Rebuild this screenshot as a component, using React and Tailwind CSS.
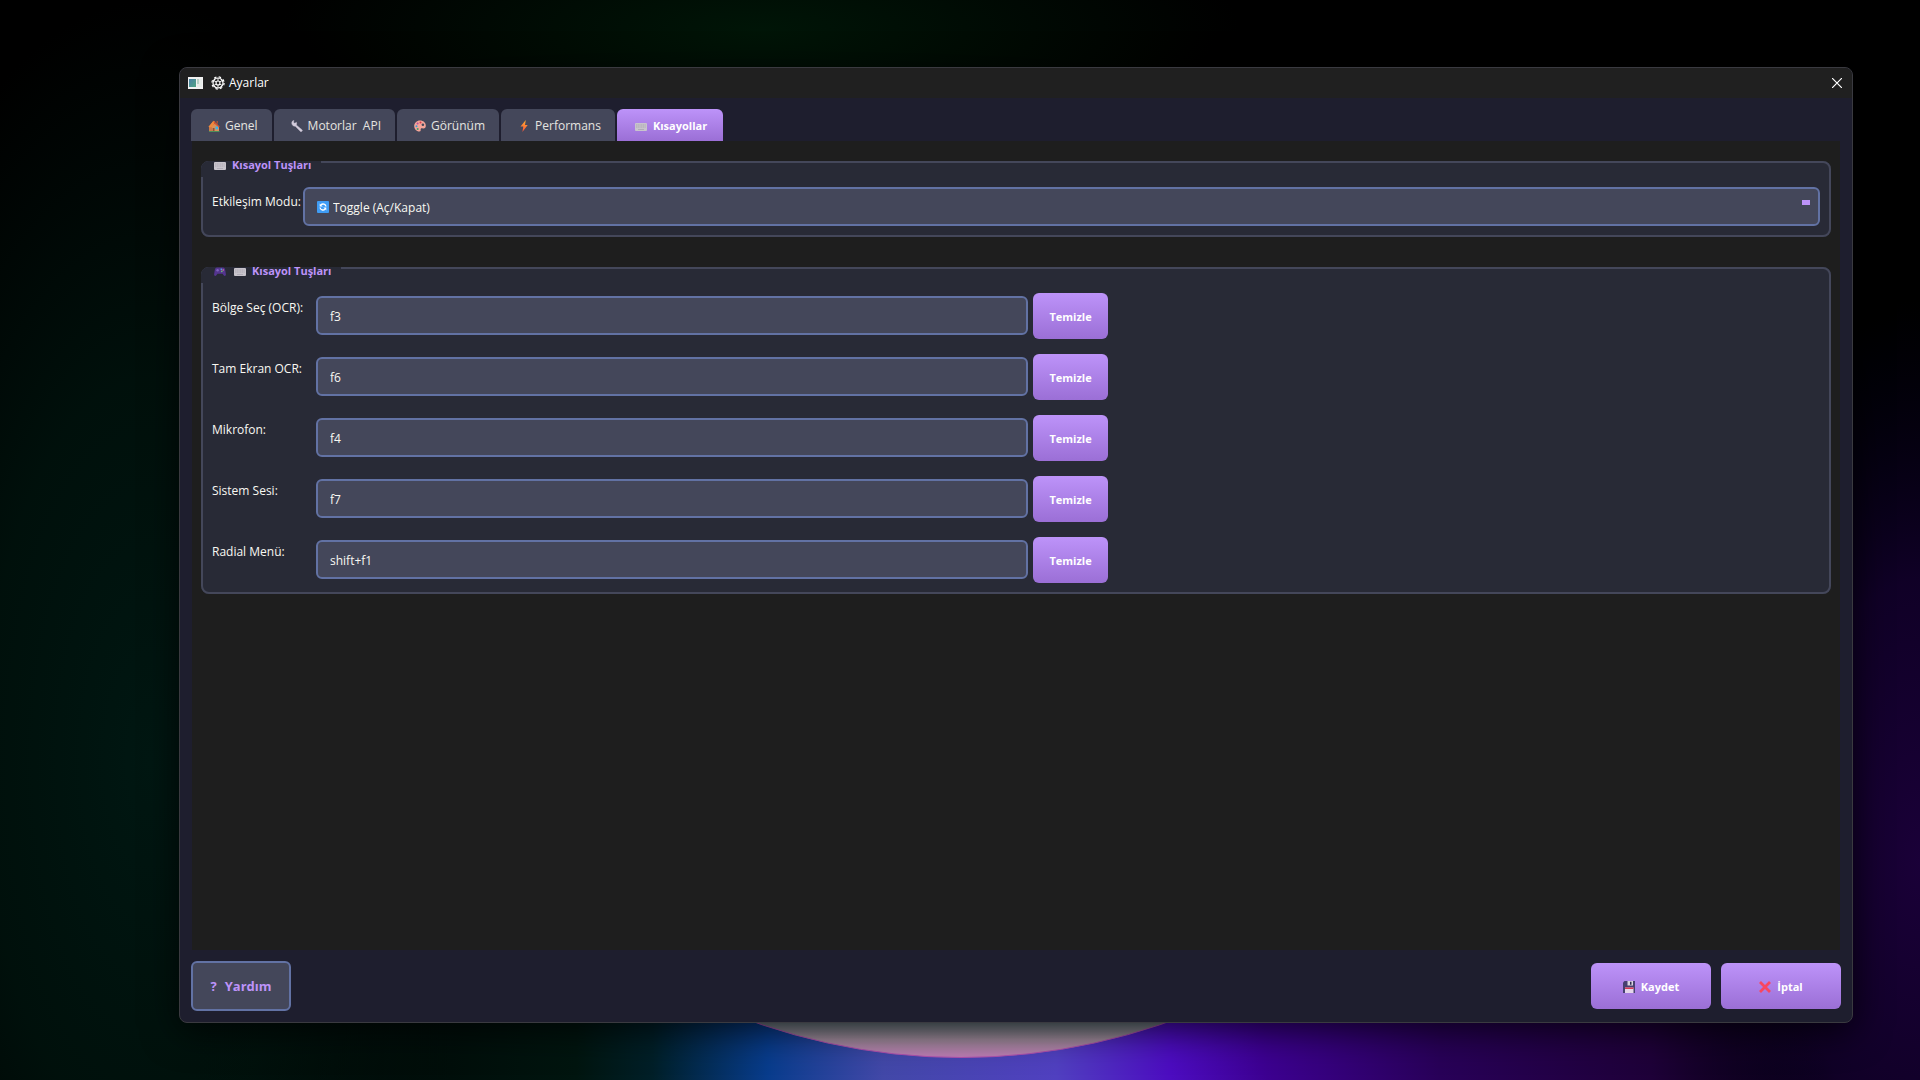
import { useState } from "react";

const TABS = [
  { id: "genel", label: "Genel", Icon: HouseIcon },
  { id: "motorlar", label: "Motorlar  API", Icon: WrenchIcon },
  { id: "gorunum", label: "Görünüm", Icon: PaletteIcon },
  { id: "performans", label: "Performans", Icon: BoltIcon },
  { id: "kisayollar", label: "Kısayollar", Icon: KeyboardIcon },
];

const SHORTCUTS = [
  { id: "region", label: "Bölge Seç (OCR):", key: "f3" },
  { id: "fullscreen", label: "Tam Ekran OCR:", key: "f6" },
  { id: "mic", label: "Mikrofon:", key: "f4" },
  { id: "system", label: "Sistem Sesi:", key: "f7" },
  { id: "radial", label: "Radial Menü:", key: "shift+f1" },
];

function HouseIcon() {
  return (
    <svg viewBox="0 0 12 12" className="size-3 shrink-0" aria-hidden="true">
      <path d="M4 5.500 8 3l3 4v4.500H4z" fill="#d9935c" />
      <path d="M1 6.500 5 1.500l1.500 1L4 6.500v5H1z" fill="#c97a4a" />
      <path d="M.3 7 5.500.8l2 1.200L3.700 7.500z" fill="#f08a3c" />
      <path d="M5.500.8 11.700 6.600l-1 .9L6 3.300z" fill="#d6542f" />
      <path d="M8.500 1h1.500v3L8.500 2.800z" fill="#a8553a" />
      <path d="M4.700 8h1.800v3.500H4.700z" fill="#8a5238" />
      <path d="M7.500 6.500h2.500v2.700H7.500z" fill="#35b5ee" />
      <path d="M1 11h10.500v1H1z" fill="#4b8f5a" />
    </svg>
  );
}

function WrenchIcon() {
  return (
    <svg viewBox="0 0 12 12" className="size-3 shrink-0" aria-hidden="true">
      <path
        d="M.8 3.600C.5 1.900 1.400.6 2.900.4L2.500 2.300l1.300 1 1.600-1c.5 1.300.2 2.300-.1 2.700l5.900 4.900c.7.800-.9 2.400-1.700 1.700L4.300 6.200C2.500 6.500 1.100 5.300.8 3.600z"
        fill="#d3ccdc"
        stroke="#d3ccdc"
        strokeWidth=".4"
      />
    </svg>
  );
}

function PaletteIcon() {
  return (
    <svg viewBox="0 0 12 12" className="size-3 shrink-0" aria-hidden="true">
      <path
        d="M6 .5C2.700.5.200 3 .200 6s2.300 5.500 5.100 5.500c1.500 0 1.400-1 1.300-2 0-1 .8-1.500 1.800-1.200 2 .6 3.400-.4 3.400-2.600C11.800 2.600 9.300.5 6 .5z"
        fill="#f5a598"
      />
      <circle cx="2.500" cy="6.300" r="1" fill="#35a0d8" />
      <circle cx="3.600" cy="3.500" r="1" fill="#b94f9a" />
      <circle cx="6.500" cy="2.500" r="1" fill="#d8394c" />
      <circle cx="3.700" cy="9" r="1" fill="#3fa36a" />
      <circle cx="8.900" cy="4.800" r="1.300" fill="#44475a" />
    </svg>
  );
}

function BoltIcon() {
  return (
    <svg viewBox="0 0 12 12" className="size-3 shrink-0" aria-hidden="true">
      <defs>
        <linearGradient id="bolt" x1="0" y1="0" x2="0" y2="1">
          <stop offset="0" stopColor="#ffb02e" />
          <stop offset="1" stopColor="#f8503c" />
        </linearGradient>
      </defs>
      <path d="M7.800 0 2.500 6.600h2.800L4.400 12l5.300-7H7z" fill="url(#bolt)" />
    </svg>
  );
}

function KeyboardIcon() {
  return (
    <svg viewBox="0 0 12 12" className="size-3 shrink-0" aria-hidden="true">
      <rect y="3" width="12" height="8" rx="1" fill="#c8c4cc" />
      <path
        d="M1 5h10M1 7h10"
        stroke="#aca8b3"
        strokeWidth="1"
        strokeDasharray="1.200 .5"
      />
      <path d="M3 9.500h6" stroke="#b0acb8" />
    </svg>
  );
}

function GamepadIcon() {
  return (
    <svg viewBox="0 0 12 12" className="mr-0.5 size-3 shrink-0" aria-hidden="true">
      <path
        d="M3 2.500h6c1.400 0 2 1.200 2.300 3l.6 3.800c.2 1.800-1.500 2-2.300.9L8.500 8.800h-5l-1.100 1.400C1.600 11.300-.1 11.100.1 9.300l.6-3.800c.3-1.800.9-3 2.300-3z"
        fill="#54358f"
      />
      <circle cx="3.600" cy="5.300" r="1.200" fill="#7e62bd" />
      <circle cx="7.300" cy="4.300" r=".8" fill="#4fb7e8" />
      <circle cx="9.200" cy="5" r=".8" fill="#e8799b" />
      <circle cx="7.800" cy="6.400" r=".8" fill="#6fbf73" />
    </svg>
  );
}

function RefreshIcon() {
  return (
    <svg viewBox="0 0 12 12" className="size-3 shrink-0" aria-hidden="true">
      <rect width="12" height="12" rx="1" fill="#3f9cf5" />
      <path
        d="M3 6.500A3 3 0 0 0 8 8.200M9 5.500A3 3 0 0 0 4 3.800"
        fill="none"
        stroke="#fff"
        strokeWidth="1.300"
      />
      <path d="M2.700 2.500v3h3zM9.300 9.500v-3h-3z" fill="#fff" />
    </svg>
  );
}

function FloppyIcon() {
  return (
    <svg viewBox="0 0 12 12" className="size-3 shrink-0" aria-hidden="true">
      <path d="M1.500 0H12v12H0V1.500z" fill="#463f70" />
      <path d="M4.500 0H10v4.500H4.500z" fill="#d8d3e0" />
      <path d="M7 .7h1.500v3H7z" fill="#2f2a4d" />
      <path d="M2 6.500h8.500V12H2z" fill="#e4d6ea" />
      <path d="M2 6.500h8.500V8H2z" fill="#d83a55" />
    </svg>
  );
}

function CrossIcon() {
  return (
    <svg viewBox="0 0 12 12" className="size-3 shrink-0" aria-hidden="true">
      <path d="m1 1 10 10M11 1 1 11" stroke="#f8465f" strokeWidth="2.800" />
    </svg>
  );
}

function AppIcon() {
  return (
    <svg viewBox="0 0 15 12" className="h-3 w-[15px] shrink-0" aria-hidden="true">
      <defs>
        <linearGradient id="app" x1="0" y1="0" x2="1" y2="1">
          <stop offset="0" stopColor="#4a7fa5" />
          <stop offset="1" stopColor="#4fa583" />
        </linearGradient>
      </defs>
      <rect width="15" height="12" fill="#f1f1f1" />
      <rect x="1" y="2" width="7" height="8" fill="url(#app)" />
      <rect x="9" y="2" width="5" height="8" fill="#e6ebe8" />
      <rect x="9" y="2" width="2" height="5" fill="#b9d0c5" />
    </svg>
  );
}

function GearIcon() {
  return (
    <svg viewBox="0 0 14 14" className="size-3.5 shrink-0" fill="none" stroke="#fff" aria-hidden="true">
      <circle cx="7" cy="7" r="5" strokeWidth="1.200" />
      <circle cx="7" cy="7" r="6.100" strokeWidth="1.200" strokeDasharray="2.400 2.390" />
      <circle cx="7" cy="7" r="2" strokeWidth="1.100" />
      <path
        d="M7 5V2M8.700 6l2.600-1.500M8.700 8l2.600 1.500M7 9v3M5.300 8l-2.600 1.500M5.300 6 2.700 4.500"
        strokeWidth=".9"
      />
    </svg>
  );
}

function Backdrop() {
  return (
    <svg
      viewBox="0 0 1920 1080"
      preserveAspectRatio="xMidYMid slice"
      className="absolute inset-0 size-full"
      aria-hidden="true"
    >
      <defs>
        <radialGradient id="topGreen">
          <stop offset="0" stopColor="#001507" />
          <stop offset="1" stopColor="#001507" stopOpacity="0" />
        </radialGradient>
        <radialGradient id="leftGreen">
          <stop offset="0" stopColor="#001712" />
          <stop offset=".5" stopColor="#00140e" stopOpacity=".8" />
          <stop offset="1" stopColor="#00140e" stopOpacity="0" />
        </radialGradient>
        <radialGradient id="rightPurple">
          <stop offset="0" stopColor="#1a0038" />
          <stop offset=".5" stopColor="#140030" stopOpacity=".8" />
          <stop offset="1" stopColor="#040020" stopOpacity="0" />
        </radialGradient>
        <linearGradient id="floor">
          <stop offset=".1" stopColor="#00150f" stopOpacity="0" />
          <stop offset=".3" stopColor="#00150f" />
          <stop offset=".34" stopColor="#001f28" />
          <stop offset=".4" stopColor="#083c8c" />
          <stop offset=".46" stopColor="#4248a8" />
          <stop offset=".55" stopColor="#5040c0" />
          <stop offset=".61" stopColor="#4c0cc0" />
          <stop offset=".66" stopColor="#3c0090" />
          <stop offset=".75" stopColor="#280058" />
          <stop offset=".86" stopColor="#1e0038" />
          <stop offset=".95" stopColor="#1a0038" stopOpacity="0" />
        </linearGradient>
        <linearGradient id="lens" x1="0" y1="1020" x2="0" y2="1058" gradientUnits="userSpaceOnUse">
          <stop offset="0" stopColor="#64787e" />
          <stop offset=".5" stopColor="#a08c9c" />
          <stop offset="1" stopColor="#c07cb8" />
        </linearGradient>
      </defs>
      <rect width="1920" height="1080" fill="#000" />
      <ellipse cx="760" cy="30" rx="480" ry="130" fill="url(#topGreen)" />
      <ellipse cx="150" cy="760" rx="330" ry="760" fill="url(#leftGreen)" />
      <ellipse cx="1920" cy="860" rx="260" ry="560" fill="url(#rightPurple)" />
      <rect y="1000" width="1920" height="80" fill="url(#floor)" />
      <path d="M700 1000A621 621 0 0 0 1222 1000z" fill="url(#lens)" stroke="#b050b0" />
    </svg>
  );
}

function Group({ title, icons, children }) {
  return (
    <fieldset className="relative min-w-0 rounded-lg border-2 border-[#44475a] bg-[#282a36] px-[9px]">
      <legend className="absolute -top-0.5 -left-0.5 flex h-4 items-center gap-1.5 rounded-tl-lg bg-[#282a36] pr-2.5 pb-2 pl-[13px] text-[11px] font-bold text-[#bd93f9]">
        {icons}
        {title}
      </legend>
      {children}
    </fieldset>
  );
}

function PrimaryButton({ className = "", children, ...props }) {
  return (
    <button
      type="button"
      className={`flex h-[46px] items-center justify-center gap-1.5 rounded-md bg-linear-to-b from-[#bd93f9] to-[#9b6fd6] pt-0.5 text-[11px] font-bold text-white ${className}`}
      {...props}
    >
      {children}
    </button>
  );
}

export default function App() {
  const [tab, setTab] = useState("kisayollar");
  const [keys, setKeys] = useState(() => Object.fromEntries(SHORTCUTS.map((s) => [s.id, s.key])));

  const setKey = (id, value) => setKeys((prev) => ({ ...prev, [id]: value }));

  return (
    <div className="relative flex min-h-screen bg-black pt-[67px] pr-[67px] pb-[57px] pl-[179px] font-['Open_Sans','Noto_Sans',sans-serif] text-xs text-[#f8f8f2]">
      <Backdrop />

      <main className="relative flex min-w-0 flex-1 flex-col overflow-hidden rounded-lg border border-[#3a3a40] bg-[#1e1e2e] shadow-[0_8px_36px_rgba(0,0,0,0.7)]">
        <header className="flex h-[30px] items-center gap-2 bg-[#202020] pr-2.5 pl-2">
          <AppIcon />
          <h1 className="flex items-center gap-1 text-white">
            <GearIcon />
            Ayarlar
          </h1>
          <button type="button" aria-label="Kapat" className="ml-auto">
            <svg viewBox="0 0 10 10" className="size-2.5" stroke="#fff" strokeWidth="1.200">
              <path d="m0 0 10 10M10 0 0 10" />
            </svg>
          </button>
        </header>

        <nav className="flex gap-0.5 px-[11px] pt-[11px]">
          {TABS.map(({ id, label, Icon }) => (
            <button
              key={id}
              type="button"
              onClick={() => setTab(id)}
              className={`flex h-8 items-center rounded-t-md pt-0.5 whitespace-pre ${
                tab === id
                  ? "gap-1.5 bg-linear-to-b from-[#bd93f9] to-[#9b6fd6] pr-4 pl-[18px] text-[11px] font-bold text-white"
                  : "gap-[5px] bg-[#44475a] pr-3.5 pl-[17px] text-[#e4e4e0]"
              }`}
            >
              <Icon />
              {label}
            </button>
          ))}
        </nav>

        <div className="mx-3 flex flex-1 flex-col gap-[30px] bg-[#1e1e1e] px-[9px] pt-5">
          <Group title="Kısayol Tuşları" icons={<KeyboardIcon />}>
            <div className="flex pt-6 pb-[9px]">
              <label htmlFor="mode" className="w-[91px] pt-[7px] leading-4 whitespace-nowrap">
                Etkileşim Modu:
              </label>
              <div className="relative flex-1">
                <select
                  id="mode"
                  className="h-[39px] w-full appearance-none rounded-md border-2 border-[#6272a4] bg-[#44475a] pt-0.5 pl-7"
                >
                  <option>Toggle (Aç/Kapat)</option>
                </select>
                <span className="pointer-events-none absolute inset-y-0 left-3.5 flex items-center">
                  <RefreshIcon />
                </span>
                <span className="pointer-events-none absolute top-[13px] right-2.5 h-[5px] w-2 bg-[#bd93f9]" />
              </div>
            </div>
          </Group>

          <Group
            title="Kısayol Tuşları"
            icons={
              <>
                <GamepadIcon />
                <KeyboardIcon />
              </>
            }
          >
            <div className="flex max-w-[896px] flex-col gap-[15px] pt-6 pb-[9px]">
              {SHORTCUTS.map(({ id, label }) => (
                <div key={id} className="flex items-center">
                  <label htmlFor={id} className="w-[104px] self-start pt-[7px] leading-4">
                    {label}
                  </label>
                  <input
                    id={id}
                    value={keys[id]}
                    onChange={(e) => setKey(id, e.target.value)}
                    className="mb-px h-[39px] min-w-0 flex-1 rounded-md border-2 border-[#6272a4] bg-[#44475a] px-3 pt-0.5"
                  />
                  <PrimaryButton className="ml-[5px] w-[75px]" onClick={() => setKey(id, "")}>
                    Temizle
                  </PrimaryButton>
                </div>
              ))}
            </div>
          </Group>
        </div>

        <footer className="flex items-center gap-2.5 px-[11px] py-[11px]">
          <button
            type="button"
            className="flex h-[50px] w-[100px] items-center justify-center gap-2 rounded-md border-2 border-[#6272a4] bg-[#44475a] pt-0.5 text-[13px] font-bold text-[#bd93f9]"
          >
            <span>?</span>
            Yardım
          </button>
          <PrimaryButton className="ml-auto w-[120px]">
            <FloppyIcon />
            Kaydet
          </PrimaryButton>
          <PrimaryButton className="w-[120px]">
            <CrossIcon />
            İptal
          </PrimaryButton>
        </footer>
      </main>
    </div>
  );
}
